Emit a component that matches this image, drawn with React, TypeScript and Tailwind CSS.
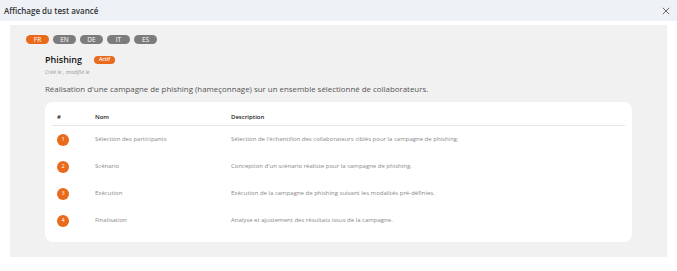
import React from "react";

const rows = [
  { n: 1, nom: "Sélection des participants", desc: "Sélection de l'échantillon des collaborateurs ciblés pour la campagne de phishing." },
  { n: 2, nom: "Scénario", desc: "Conception d'un scénario réaliste pour la campagne de phishing." },
  { n: 3, nom: "Exécution", desc: "Exécution de la campagne de phishing suivant les modalités pré-définies." },
  { n: 4, nom: "Finalisation", desc: "Analyse et ajustement des résultats issus de la campagne." },
];

export default function App() {
  return (
    <div className="w-[677px] h-[271px] bg-white font-['Open_Sans',sans-serif] overflow-hidden">
      <div className="h-[21px] bg-[#eef1f6] flex items-center justify-between pl-[4px] pr-[7px]">
        <span className="text-[8px] font-semibold text-[#333]">Affichage du test avancé</span>
        <svg width="8" height="8" viewBox="0 0 10 10" className="text-[#555]">
          <path d="M1 1L9 9M9 1L1 9" stroke="currentColor" strokeWidth="1.1" />
        </svg>
      </div>
      <div className="mt-[4px] mx-[10px] h-[232px] bg-[#f1f1f1] pt-[10px] pl-[16px]">
        <div className="flex gap-[4px]">
          {["FR", "EN", "DE", "IT", "ES"].map((l, i) => (
            <div
              key={l}
              className={`w-[23px] h-[9px] rounded-full flex items-center justify-center text-[6.5px] text-white ${i === 0 ? "bg-[#ea6a1c]" : "bg-[#7c7c7c]"}`}
            >
              {l}
            </div>
          ))}
        </div>
        <div className="pl-[19px]">
          <div className="flex items-center mt-[11px] h-[10px]">
            <span className="text-[9px] font-semibold text-[#111] w-[49px]">Phishing</span>
            <span className="h-[8px] px-[5px] rounded-full bg-[#ea6a1c] text-white text-[5px] font-semibold flex items-center">Actif</span>
          </div>
          <div className="mt-[3px] text-[5.5px] italic text-[#999] leading-[8px]">Créé le , modifié le</div>
          <div className="mt-[8px] text-[7.9px] text-[#555] leading-[10px]">
            Réalisation d'une campagne de phishing (hameçonnage) sur un ensemble sélectionné de collaborateurs.
          </div>
          <div className="mt-[8px] w-[587px] h-[140px] bg-white rounded-[8px] px-[7px] pt-[7px]">
            <div className="flex items-center h-[17px] border-b border-[#e6e6e6] text-[6px] font-semibold text-[#222]">
              <div className="w-[43px] pl-[5px]">#</div>
              <div className="w-[136px]">Nom</div>
              <div>Description</div>
            </div>
            {rows.map((r) => (
              <div key={r.n} className="flex items-center h-[27px] text-[6px] text-[#888]">
                <div className="w-[43px] pl-[5px]">
                  <div className="w-[12px] h-[12px] rounded-full bg-[#ea6a1c] text-white text-[5.5px] flex items-center justify-center">
                    {r.n}
                  </div>
                </div>
                <div className="w-[136px]">{r.nom}</div>
                <div>{r.desc}</div>
              </div>
            ))}
          </div>
        </div>
      </div>
    </div>
  );
}
